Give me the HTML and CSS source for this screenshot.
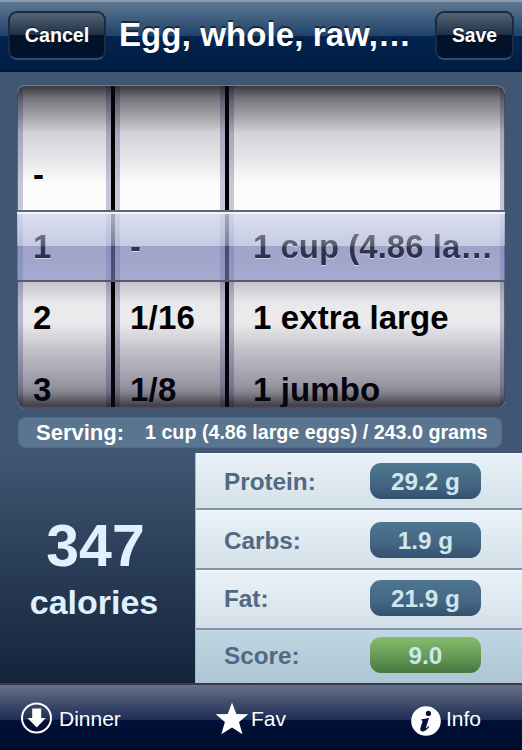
FILE: index.html
```html
<!DOCTYPE html>
<html lang="en">
<head>
  <meta charset="UTF-8" />
  <title>Egg, whole, raw</title>
  <link rel="stylesheet" href="styles.css">
</head>
<body>

  <header class="navbar">
    <button class="nav-btn cancel">Cancel</button>
    <h1>Egg, whole, raw,…</h1>
    <button class="nav-btn save">Save</button>
  </header>

  <main>
    <div class="picker">
      <div class="wheel whole">
        <div>-</div>
        <div class="picked">1</div>
        <div>2</div>
        <div>3</div>
      </div>
      <div class="wheel fraction">
        <div></div>
        <div class="picked">-</div>
        <div>1/16</div>
        <div>1/8</div>
      </div>
      <div class="wheel unit">
        <div></div>
        <div class="picked">1 cup (4.86 la…</div>
        <div>1 extra large</div>
        <div>1 jumbo</div>
      </div>
      <div class="shade"></div>
      <div class="selection"></div>
    </div>

    <div class="serving">
      <span class="serving-label">Serving:</span>
      <span class="serving-value">1 cup (4.86 large eggs) / 243.0 grams</span>
    </div>

    <section class="nutrition">
      <div class="calories">
        <div class="amount">347</div>
        <div class="caption">calories</div>
      </div>
      <div class="facts">
        <div class="fact"><span>Protein:</span><span class="pill">29.2 g</span></div>
        <div class="fact"><span>Carbs:</span><span class="pill">1.9 g</span></div>
        <div class="fact fat"><span>Fat:</span><span class="pill">21.9 g</span></div>
        <div class="fact score"><span>Score:</span><span class="pill green">9.0</span></div>
      </div>
    </section>
  </main>

  <footer class="toolbar">
    <div class="tool dinner">
      <svg width="32" height="32" viewBox="0 0 32 32">
        <circle cx="16.500" cy="16" r="14.500" fill="none" stroke="#fff" stroke-width="2"/>
        <path d="M12.200 6.500h9v9.500h4.600L16.700 25.500 7.500 16h4.700z" fill="#fff"/>
      </svg>
      <span>Dinner</span>
    </div>
    <div class="tool fav">
      <svg width="34" height="34" viewBox="0 0 34 34">
        <path d="M17 .5l4.400 11.400 11.900.4-9.300 7.700 3.500 12.200L17 25.600 6.300 32.200l3.600-12.200L.7 12.300l12-.4z" fill="#fff"/>
      </svg>
      <span>Fav</span>
    </div>
    <div class="tool info">
      <svg width="30" height="30" viewBox="0 0 30 30">
        <circle cx="15" cy="15" r="14.8" fill="#fff"/>
        <circle cx="17.400" cy="7.400" r="2.600" fill="#06143a"/>
        <path d="M10.500 13.200c2.400-.2 4.700-.7 7.600-1.500l-3.200 10.100c-.3 1 .5 1 2.400-1.700l.9.7c-2.500 3.300-4.400 4.700-6.400 4.700-2.200 0-3-1.500-2.400-3.400l2-6.300c.3-1-.1-1.500-1.200-1.500z" fill="#06143a"/>
      </svg>
      <span>Info</span>
    </div>
  </footer>

</body>
</html>
```
FILE: styles.css
```css
* {
  box-sizing: border-box;
}
body {
  margin: 0;
  width: 522px;
  height: 750px;
  overflow: hidden;
  display: flex;
  flex-direction: column;
  background-color: #405672;
  font-family: "Liberation Sans", Arial, sans-serif;
  font-weight: bold;
}

/* top bar */
.navbar {
  height: 72px;
  display: flex;
  align-items: flex-start;
  border-top: 2px solid #8b9cb0;
  border-bottom: 2px solid #06152b;
  background: linear-gradient(#5f7891 0, #1f426a 34px, #032450 34px, #001e43 100%);
}
.navbar h1 {
  flex: 1;
  margin: 13px 0 0;
  padding-left: 13px;
  font-size: 33px;
  line-height: 39px;
  letter-spacing: 0.1px;
  white-space: nowrap;
  color: white;
  text-shadow: 0 -2px 0 rgba(0, 0, 0, 0.5);
}
.nav-btn {
  height: 49px;
  margin: 9px 0 0;
  padding: 0 0 1px;
  font: bold 19.7px "Liberation Sans", Arial, sans-serif;
  color: white;
  text-shadow: 0 -1px 0 rgba(0, 0, 0, 0.6);
  border: 2px solid #1a2c44;
  border-bottom-color: #344c6a;
  border-radius: 9px;
  background: linear-gradient(#566372 0, #1b2f48 50%, #031226 50%, #00142f 100%);
}
.cancel {
  width: 98px;
  margin-left: 8px;
}
.save {
  width: 79px;
  margin-right: 8px;
  padding: 1px 0 0;
  font-size: 19.3px;
}

main {
  flex: none;
  height: 611px;
  display: flex;
  flex-direction: column;
}

/* picker */
.picker {
  position: relative;
  width: 488px;
  height: 324px;
  margin: 13px 0 0 17px;
  display: flex;
  gap: 4px;
  overflow: hidden;
  background: black;
  border-radius: 9px;
}
.wheel {
  overflow: hidden;
  padding-top: 54px;
  background: #fcfcfc;
  border: solid #c6c5da;
  border-width: 0 5px;
  font-size: 33px;
  line-height: 71.5px;
  letter-spacing: 0.2px;
  white-space: nowrap;
  color: black;
}
.wheel div {
  height: 71.5px;
}
.whole {
  width: 94px;
  padding-left: 10px;
  border-left-width: 6px;
}
.fraction {
  width: 110px;
  padding-left: 10px;
}
.unit {
  width: 276px;
  padding-left: 19px;
  letter-spacing: 0.1px;
}
/* the picked row shows through the glass bar */
.picked {
  position: relative;
  z-index: 1;
  color: transparent;
  background: linear-gradient(#777a8c 20px, #55586c 35px, #33364e 36px, #2b2e48 50px);
  -webkit-background-clip: text;
  background-clip: text;
  filter: drop-shadow(0 1.5px 0 rgba(225, 228, 246, 0.75));
}
.unit .picked {
  letter-spacing: 0;
}
.shade {
  position: absolute;
  inset: 0;
  border-radius: 9px;
  background:
    linear-gradient(rgba(10, 8, 16, 0.82) 0, rgba(10, 8, 20, 0.55) 14px, rgba(10, 8, 20, 0.38) 30px, rgba(10, 8, 35, 0.17) 48px, rgba(10, 8, 35, 0.1) 70px, transparent 100px,
      transparent 197px, rgba(10, 8, 35, 0.23) 197px, rgba(10, 8, 35, 0.08) 218px, rgba(10, 8, 35, 0.07) 238px, rgba(10, 8, 40, 0.24) 265px, rgba(10, 8, 40, 0.42) 300px, rgba(10, 8, 25, 0.5) 308px, rgba(10, 8, 20, 0.76) 320px);
  box-shadow: inset 0 1px 0 #6d7b91, inset 0 -2px 0 #4b4c63, inset 1px 0 0 rgba(50, 60, 85, 0.7), inset -1px 0 0 rgba(50, 60, 85, 0.7);
}
.selection {
  position: absolute;
  left: 0;
  right: 0;
  top: 125px;
  height: 72px;
  border-top: 2px solid #62647a;
  border-bottom: 2px solid #565b74;
  background: linear-gradient(rgba(212, 217, 238, 0.8) 0, rgba(176, 182, 216, 0.7) 34px, rgba(109, 116, 174, 0.65) 34px, rgba(119, 126, 182, 0.65) 100%);
  box-shadow: inset 0 2px 0 #f2f3fb;
}

/* serving line */
.serving {
  width: 484px;
  height: 31px;
  margin: 8px 0 5px 18px;
  padding-left: 17px;
  display: flex;
  align-items: center;
  border-radius: 7px;
  background: #5a758f;
  border: 1px solid #506b87;
  color: white;
  white-space: nowrap;
}
.serving-label {
  width: 109px;
  font-size: 22px;
}
.serving-value {
  font-size: 19.7px;
}

/* nutrition */
.nutrition {
  flex: 1;
  display: flex;
}
.calories {
  width: 195px;
  padding-top: 61px;
  text-align: center;
  color: #dff0ff;
  background: linear-gradient(#405672, #13233a);
}
.amount {
  font-size: 59px;
  line-height: 64px;
  padding-right: 4px;
}
.caption {
  font-size: 34px;
  line-height: 40px;
  margin-top: 4px;
  padding-right: 7px;
}
.facts {
  flex: 1;
  display: grid;
  grid-template-rows: 57px 60px 60px 1fr;
  border-left: 1px solid #a7b5c4;
}
.fact {
  display: flex;
  align-items: center;
  padding-left: 28px;
  font-size: 24.3px;
  color: #526883;
  background: linear-gradient(#e9f2f8, #d4e0e8);
  border-top: 1px solid #f4fafd;
  border-bottom: 2px solid #8494a8;
}
.fact span:first-child {
  width: 146px;
  padding-top: 2px;
}
.fat {
  padding-bottom: 4px;
}
.score {
  padding-bottom: 4px;
  background: linear-gradient(#bfd7e3, #adc6d3);
  border-top-color: #c7dce7;
  border-bottom: 0;
}
.fact.score span:first-child {
  padding-top: 1px;
}
.pill {
  width: 111px;
  height: 36px;
  line-height: 38px;
  border-radius: 11px;
  text-align: center;
  color: #cfe6ee;
  background: linear-gradient(#4e7690, #446683 60%, #33506f);
}
.green {
  line-height: 37px;
  background: linear-gradient(#86bd6c, #619653 60%, #467640);
}

/* bottom bar */
.toolbar {
  flex: 1;
  display: flex;
  padding-top: 17px;
  border-top: 2px solid #353a4e;
  background: linear-gradient(#687089 0, #1c2c54 35px, #001038 35px, #000c2c 100%);
  color: white;
  font-size: 21px;
  font-weight: normal;
}
.tool {
  display: flex;
  align-items: center;
  height: 34px;
}
.dinner {
  width: 194px;
  padding-left: 20px;
  gap: 7px;
}
.dinner svg {
  margin-bottom: 3px;
}
.fav {
  width: 217px;
  padding-left: 21px;
  gap: 2px;
}
.info {
  gap: 5px;
}
.info svg {
  margin-top: 3px;
}
```
